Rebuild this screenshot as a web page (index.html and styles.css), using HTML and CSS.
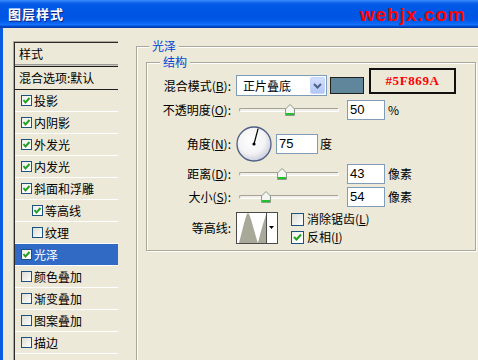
FILE: index.html
```html
<!DOCTYPE html>
<html lang="zh-CN">
<head>
<meta charset="utf-8">
<title>图层样式</title>
<link rel="stylesheet" href="styles.css">
</head>
<body>
<div class="window">
  <div class="titlebar">
    <span class="title">图层样式</span>
    <span class="watermark">webjx.com</span>
  </div>
  <div class="client">
    <div class="list">
      <div class="list-inner">
        <div class="list-head">样式</div>
        <div class="list-sep"></div>
        <div class="list-blend">混合选项:默认</div>
        <div class="item"><span class="cb on"><svg width="9" height="9" viewBox="0 0 9 9"><path d="M1.5 4 L3.5 6.5 L7.5 2" fill="none" stroke="#21A121" stroke-width="2"/></svg></span>投影</div>
        <div class="item"><span class="cb on"><svg width="9" height="9" viewBox="0 0 9 9"><path d="M1.5 4 L3.5 6.5 L7.5 2" fill="none" stroke="#21A121" stroke-width="2"/></svg></span>内阴影</div>
        <div class="item"><span class="cb on"><svg width="9" height="9" viewBox="0 0 9 9"><path d="M1.5 4 L3.5 6.5 L7.5 2" fill="none" stroke="#21A121" stroke-width="2"/></svg></span>外发光</div>
        <div class="item"><span class="cb on"><svg width="9" height="9" viewBox="0 0 9 9"><path d="M1.5 4 L3.5 6.5 L7.5 2" fill="none" stroke="#21A121" stroke-width="2"/></svg></span>内发光</div>
        <div class="item"><span class="cb on"><svg width="9" height="9" viewBox="0 0 9 9"><path d="M1.5 4 L3.5 6.5 L7.5 2" fill="none" stroke="#21A121" stroke-width="2"/></svg></span>斜面和浮雕</div>
        <div class="item sub"><span class="cb on"><svg width="9" height="9" viewBox="0 0 9 9"><path d="M1.5 4 L3.5 6.5 L7.5 2" fill="none" stroke="#21A121" stroke-width="2"/></svg></span>等高线</div>
        <div class="item sub"><span class="cb"></span>纹理</div>
        <div class="item sel"><span class="cb on"><svg width="9" height="9" viewBox="0 0 9 9"><path d="M1.5 4 L3.5 6.5 L7.5 2" fill="none" stroke="#21A121" stroke-width="2"/></svg></span>光泽</div>
        <div class="item"><span class="cb"></span>颜色叠加</div>
        <div class="item"><span class="cb"></span>渐变叠加</div>
        <div class="item"><span class="cb"></span>图案叠加</div>
        <div class="item"><span class="cb"></span>描边</div>
      </div>
    </div>

    <div class="group outer">
      <div class="legend legend-outer">光泽</div>
      <div class="group inner">
        <div class="legend legend-inner">结构</div>

        <div class="row r1">
          <span class="lbl">混合模式(<u>B</u>):</span>
          <div class="select">
            <span class="select-text">正片叠底</span>
            <span class="select-btn"><svg width="13" height="15" viewBox="0 0 13 15"><path d="M3 6 L6.5 9.5 L10 6" fill="none" stroke="#4D6185" stroke-width="2"/></svg></span>
          </div>
          <span class="swatch"></span>
          <span class="redbox">#5F869A</span>
        </div>

        <div class="row r2">
          <span class="lbl">不透明度(<u>O</u>):</span>
          <div class="slider">
            <span class="track"></span>
            <span class="thumb" style="left:46px"><svg width="10" height="12" viewBox="0 0 10 12"><path d="M5 .5 L9.5 5 V11.5 H.5 V5 Z" fill="#F4F4F0" stroke="#8C9A8C"/><rect x="1" y="9" width="8" height="2" fill="#22C22A"/></svg></span>
          </div>
          <span class="field">50</span>
          <span class="unit">%</span>
        </div>

        <div class="row r3">
          <span class="lbl">角度(<u>N</u>):</span>
          <span class="dial"><svg width="36" height="36" viewBox="0 0 36 36"><defs><radialGradient id="dg" cx="42%" cy="38%" r="62%"><stop offset="0" stop-color="#FFFFFF"/><stop offset=".65" stop-color="#F3F3F5"/><stop offset="1" stop-color="#CDD0DC"/></radialGradient></defs><circle cx="18" cy="18" r="17" fill="url(#dg)" stroke="#4E5F86" stroke-width="1.3"/><line x1="18" y1="18" x2="22.1" y2="2.6" stroke="#000" stroke-width="1.2"/><circle cx="18" cy="18" r="1.6" fill="#000"/></svg></span>
          <span class="field wide">75</span>
          <span class="unit">度</span>
        </div>

        <div class="row r4">
          <span class="lbl">距离(<u>D</u>):</span>
          <div class="slider">
            <span class="track"></span>
            <span class="thumb" style="left:38px"><svg width="10" height="12" viewBox="0 0 10 12"><path d="M5 .5 L9.5 5 V11.5 H.5 V5 Z" fill="#F4F4F0" stroke="#8C9A8C"/><rect x="1" y="9" width="8" height="2" fill="#22C22A"/></svg></span>
          </div>
          <span class="field">43</span>
          <span class="unit">像素</span>
        </div>

        <div class="row r5">
          <span class="lbl">大小(<u>S</u>):</span>
          <div class="slider">
            <span class="track"></span>
            <span class="thumb" style="left:22px"><svg width="10" height="12" viewBox="0 0 10 12"><path d="M5 .5 L9.5 5 V11.5 H.5 V5 Z" fill="#F4F4F0" stroke="#8C9A8C"/><rect x="1" y="9" width="8" height="2" fill="#22C22A"/></svg></span>
          </div>
          <span class="field">54</span>
          <span class="unit">像素</span>
        </div>

        <div class="row r6">
          <span class="lbl">等高线:</span>
          <span class="contour"><svg width="42" height="32" viewBox="0 0 42 32"><rect x=".5" y=".5" width="41" height="31" fill="#fff" stroke="#4A4A4A"/><path d="M3 31 C7 17 10 1 12 1 C14 1 18 19 22 31 C24 23 27 11 30 3 L30 31 Z" fill="#A9A999"/><line x1="30.5" y1="1" x2="30.5" y2="31" stroke="#4A4A4A"/><path d="M33 14 H38 L35.5 17 Z" fill="#000"/></svg></span>
          <div class="checks">
            <div class="chk"><span class="cb13"></span>消除锯齿(<u>L</u>)</div>
            <div class="chk"><span class="cb13 on"><svg width="11" height="11" viewBox="0 0 11 11"><path d="M2 5 L4.5 7.5 L9 2.5" fill="none" stroke="#21A121" stroke-width="2"/></svg></span>反相(<u>I</u>)</div>
          </div>
        </div>
      </div>
    </div>
  </div>
</div>
</body>
</html>
```

FILE: styles.css
```css
* { box-sizing: border-box; margin: 0; padding: 0; }

html, body {
  width: 478px;
  height: 360px;
  overflow: hidden;
}

body {
  background: #ECE9D8;
  font-family: "Noto Sans CJK SC", "Liberation Sans", sans-serif;
  font-size: 12px;
  color: #000;
}

.window {
  width: 478px;
  height: 360px;
  display: flex;
  flex-direction: column;
  overflow: hidden;
}

/* ---------- title bar ---------- */
.titlebar {
  flex: none;
  height: 28px;
  display: flex;
  align-items: center;
  justify-content: space-between;
  padding: 0 12px 0 8px;
  background: linear-gradient(to bottom,
    #3C8EFA 0px, #2C7FF5 1px, #0D60EA 3px, #0058E6 6px,
    #0054E3 17px, #0058E8 20px, #0A65F2 23px, #1672F9 25px,
    #0050DA 26px, #003DB3 27px, #003DB3 28px);
}

.title {
  color: #fff;
  font-weight: bold;
  font-size: 13px;
  line-height: 16px;
  letter-spacing: 1px;
  text-shadow: 1px 1px 0 #0A2580;
}

.watermark {
  color: #FF0000;
  font-family: "Liberation Sans", Arial, sans-serif;
  font-weight: bold;
  font-size: 19px;
  line-height: 20px;
  letter-spacing: 1px;
  margin-top: 1px;
}

/* ---------- client area ---------- */
.client {
  flex: 1;
  min-height: 0;
  display: flex;
  align-items: flex-start;
  border-left: 3px solid #0B5BE2;
  padding-left: 10px;
  overflow: hidden;
}

/* ---------- style list ---------- */
.list {
  flex: none;
  width: 105px;
  height: 319px;
  margin-top: 13px;
  border-top: 1px solid #ACA899;
  border-left: 1px solid #ACA899;
}

.list-inner {
  height: 100%;
  border-top: 1px solid #2B2B2B;
  border-left: 1px solid #2B2B2B;
}

.list-head {
  height: 21px;
  line-height: 21px;
  padding-left: 4px;
}

.list-sep {
  height: 3px;
  border-top: 1px solid #9A9A9A;
  border-bottom: 1px solid #1E1E1E;
  background: #C8C6BA;
}

.list-blend {
  height: 23px;
  line-height: 22px;
  padding-left: 4px;
  border-bottom: 1px solid #1E1E1E;
}

.item {
  height: 22px;
  display: flex;
  align-items: center;
  padding-left: 6px;
  border-bottom: 1px solid #FFFFFF;
  line-height: 21px;
  white-space: nowrap;
}

.item.sub { padding-left: 17px; }

.item.sel {
  background: #316AC5;
  color: #fff;
}

.cb {
  flex: none;
  width: 11px;
  height: 11px;
  margin-right: 2px;
  border: 1px solid #1C5180;
  background: linear-gradient(135deg, #DCDCD6 0%, #F4F4F1 70%, #FFFFFF 100%);
  display: flex;
}

.cb.on {
  background: linear-gradient(135deg, #ECECE8 0%, #FFFFFF 70%);
}

/* ---------- group boxes ---------- */
.group {
  border: 1px solid #ACA899;
}

.outer {
  flex: 1;
  height: 314px;
  margin: 18px -10px 0 18px;
  padding: 0 11px 0 9px;
  border-bottom: none;
  box-shadow: inset 1px 1px 0 #FFFFFF;
}

.inner {
  margin-top: 9px;
  padding-bottom: 4px;
  box-shadow: inset 1px 1px 0 #FFFFFF, 1px 1px 0 #FFFFFF;
}

.legend {
  width: fit-content;
  height: 14px;
  line-height: 14px;
  margin-top: -8px;
  padding: 0 3px;
  background: #ECE9D8;
  color: #0046D5;
  white-space: nowrap;
}

.legend-outer { margin-left: 3px; }
.legend-inner { margin-left: 13px; }

/* ---------- form rows ---------- */
.row {
  display: flex;
  align-items: center;
}

.lbl {
  flex: none;
  width: 84px;
  margin-right: 5px;
  text-align: right;
  line-height: 20px;
  white-space: nowrap;
}

.r1 {
  align-items: flex-end;
  margin-top: -1px;
}

.r1 .lbl { line-height: 21px; }

.r2 { margin-top: 4px; height: 20px; }
.r3 { margin-top: 6px; height: 36px; }
.r4 { margin-top: 2px; height: 20px; }
.r5 { margin-top: 3px; height: 20px; }
.r6 { margin-top: 3px; height: 36px; }

.select {
  flex: none;
  width: 91px;
  height: 21px;
  border: 1px solid #7F9DB9;
  background: #fff;
  display: flex;
  align-items: center;
  padding-left: 6px;
}

.select-text {
  line-height: 19px;
  white-space: nowrap;
}

.select-btn {
  margin-left: auto;
  margin-right: 1px;
  width: 15px;
  height: 17px;
  border: 1px solid #C6D5FB;
  border-radius: 2px;
  background: linear-gradient(to bottom, #D3DFFD 0%, #C1D2FB 50%, #B2C7F6 100%);
  display: flex;
}

.swatch {
  flex: none;
  width: 34px;
  height: 17px;
  margin: 0 0 2px 3px;
  border: 1px solid #202020;
  background: #5F869A;
}

.redbox {
  flex: none;
  width: 87px;
  height: 26px;
  margin: 0 0 2px 5px;
  border: 2px solid #111;
  display: flex;
  align-items: center;
  justify-content: center;
  color: #FF0000;
  font-family: "Liberation Serif", "Times New Roman", serif;
  font-weight: bold;
  font-size: 13px;
  letter-spacing: 0.6px;
}

.slider {
  flex: none;
  position: relative;
  width: 100px;
  height: 20px;
  margin: 0 8px 0 3px;
  display: flex;
  align-items: center;
}

.track {
  width: 100%;
  height: 4px;
  border-top: 1px solid #A3A198;
  border-left: 1px solid #A3A198;
  border-bottom: 1px solid #FFFFFF;
  border-right: 1px solid #FFFFFF;
  border-radius: 2px;
  background: #F0EFE8;
}

.thumb {
  position: absolute;
  top: 4px;
  width: 10px;
  height: 12px;
  display: flex;
}

.field {
  flex: none;
  width: 38px;
  height: 20px;
  border: 1px solid #7F9DB9;
  background: #fff;
  padding-left: 2px;
  font-family: "Liberation Sans", Arial, sans-serif;
  font-size: 13px;
  line-height: 18px;
}

.field.wide {
  width: 42px;
  margin-left: 4px;
}

.unit {
  margin-left: 3px;
  line-height: 20px;
  white-space: nowrap;
}

.r3 .unit { margin-left: 2px; }

.dial {
  flex: none;
  width: 36px;
  height: 36px;
  display: flex;
}

.contour {
  flex: none;
  width: 42px;
  height: 32px;
  display: flex;
}

.checks {
  display: flex;
  flex-direction: column;
  margin-left: 13px;
}

.chk {
  height: 18px;
  display: flex;
  align-items: center;
  white-space: nowrap;
  line-height: 18px;
}

.cb13 {
  flex: none;
  width: 13px;
  height: 13px;
  margin-right: 3px;
  border: 1px solid #1C5180;
  background: linear-gradient(135deg, #DCDCD6 0%, #F4F4F1 70%, #FFFFFF 100%);
  display: flex;
}

.cb13.on {
  background: linear-gradient(135deg, #ECECE8 0%, #FFFFFF 70%);
}
```
